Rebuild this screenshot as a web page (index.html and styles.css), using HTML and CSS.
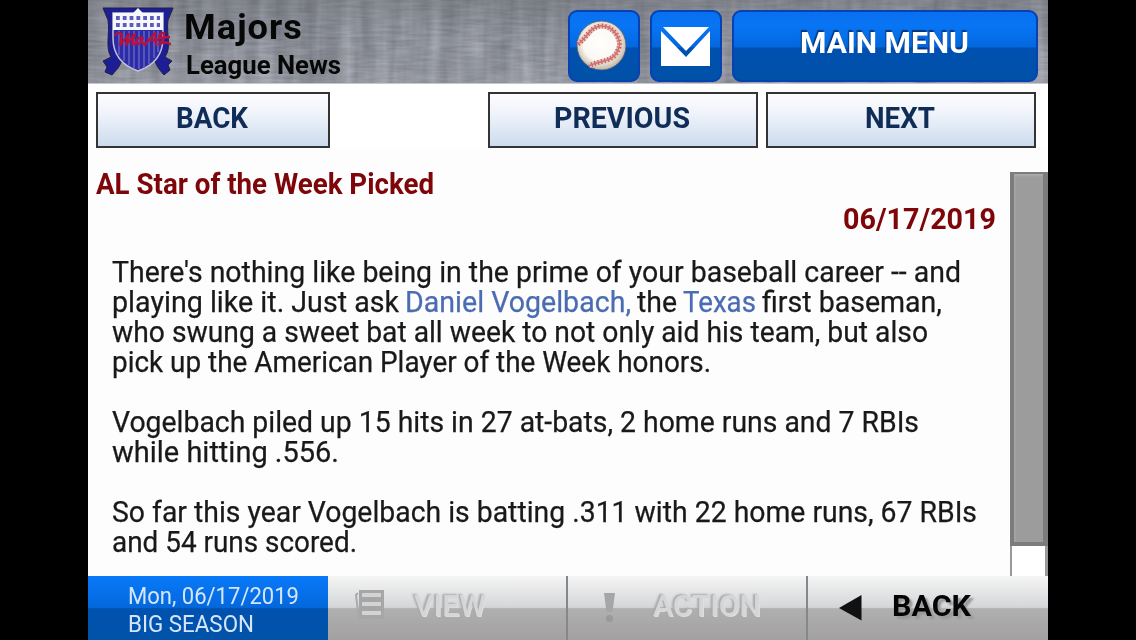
FILE: index.html
```html
<!DOCTYPE html>
<html lang="en">
<head>
<meta charset="utf-8">
<title>League News</title>
<link rel="stylesheet" href="styles.css">
</head>
<body>
<div class="app">
  <header class="header">
    <svg class="texture" width="960" height="84" viewBox="0 0 960 84">
      <defs>
        <linearGradient id="shade" x1="0" y1="0" x2="0" y2="1"><stop offset="0" stop-color="#6c7077" stop-opacity=".5"/><stop offset=".5" stop-color="#80858f" stop-opacity=".25"/><stop offset="1" stop-color="#a0a4b0" stop-opacity=".3"/></linearGradient>
        <filter id="cloud" x="0" y="0" width="100%" height="100%" color-interpolation-filters="sRGB">
          <feTurbulence type="fractalNoise" baseFrequency="0.012 0.02" numOctaves="3" seed="4"/>
          <feColorMatrix values="0.6 0 0 0 .27  0.6 0 0 0 .28  0.6 0 0 0 .31  0 0 0 0 .5"/>
        </filter>
        <filter id="weave" x="0" y="0" width="100%" height="100%" color-interpolation-filters="sRGB">
          <feTurbulence type="fractalNoise" baseFrequency="0.07 0.008" numOctaves="3" seed="9"/>
          <feColorMatrix values="0.9 0 0 0 .11  0.9 0 0 0 .12  0.9 0 0 0 .15  0 0 0 0 .4"/>
        </filter>
        <filter id="grain" x="0" y="0" width="100%" height="100%" color-interpolation-filters="sRGB">
          <feTurbulence type="fractalNoise" baseFrequency="0.04 0.35" numOctaves="2" seed="3"/>
          <feColorMatrix values="0.7 0 0 0 .21  0.7 0 0 0 .22  0.7 0 0 0 .25  0 0 0 0 .25"/>
        </filter>
      </defs>
      <rect width="960" height="84" fill="#92959d"/>
      <rect width="960" height="84" filter="url(#cloud)"/>
      <rect width="960" height="84" filter="url(#weave)"/>
      <rect width="960" height="84" filter="url(#grain)"/>
      <rect width="960" height="84" fill="url(#shade)"/>
    </svg>
    <svg class="crest" width="72" height="72" viewBox="0 0 72 72">
      <g fill="#1d1d96" stroke="#222238" stroke-width="1">
        <path d="M1 1H71L66 13C64 27 70 40 63 50L70 54L66 58L68 63L62 68C57 62 53 58 52 49L60 20H12L21 49C19 59 15 62 10 68L3 65L5 60L1 54L9 50C3 40 8 27 6 13Z"/>
      </g>
      <path d="M11 6H61V31C61 47 53 58 36 64C19 58 11 47 11 31Z" fill="#2c2ca8" stroke="#c2c2d6" stroke-width="1.5"/>
      <path d="M17 24V48M22 24V54M27 24V58M32 24V61M37 24V62M42 24V61M47 24V57M52 24V51M56 24V45" stroke="#6060bf" stroke-width="1.6"/>
      <path d="M11 6H31L36 1L41 6H61V23H11Z" fill="#f6f6fb"/>
      <path d="M14 11H58M14 18H58" stroke="#5c5cbd" stroke-width="3.8" stroke-dasharray="3.8 3"/>
      <g fill="none" stroke="#b5123f" stroke-width="2.300" stroke-linecap="round" stroke-linejoin="round">
        <path d="M13 28Q16 25 20 27L18 38L27 27L24 38L33 27L30 37Q33 38 35 35"/>
        <path d="M41 31Q35 30 34 35Q35 39 39 35L41 31Q38 37 43 37"/>
        <path d="M43 38L53 26L54 38M46 33H56M57 37Q63 34 62 26Q57 26 57 31L67 30M58 37Q64 34 68 37"/>
      </g>
    </svg>
    <div class="titles">
      <div class="row-title"><span class="fit" data-w="119">Majors</span></div>
      <div class="row-sub"><span class="fit" data-w="155">League News</span></div>
    </div>
    <div class="btn icon-btn">
      <svg width="52" height="52" viewBox="0 0 52 52">
        <defs>
          <radialGradient id="ball" cx=".48" cy=".45" r=".55"><stop offset="0" stop-color="#fff"/><stop offset=".65" stop-color="#fbf8f2"/><stop offset="1" stop-color="#bfb39f"/></radialGradient>
        </defs>
        <circle cx="25.500" cy="25.500" r="24.500" fill="url(#ball)" stroke="#4c5a78" stroke-width=".8"/>
        <g fill="none">
          <path d="M2 24C12 17 13 8 24 6C39 5 47 22 42 30C37 43 23 40 13 46" stroke="#e4c3bd" stroke-width="5"/>
          <path d="M2 24C12 17 13 8 24 6C39 5 47 22 42 30C37 43 23 40 13 46" stroke="#cd5f5f" stroke-width="5" stroke-dasharray="1.200 2.200"/>
          <path d="M2 24C12 17 13 8 24 6C39 5 47 22 42 30C37 43 23 40 13 46" stroke="#d0706e" stroke-width="1.5"/>
        </g>
      </svg>
    </div>
    <div class="btn icon-btn mail">
      <svg width="50" height="41" viewBox="0 0 50 41">
        <path d="M0 5L25 31L49 5V40H0Z" fill="#fff"/>
        <path d="M2 1H48L25 25Z" fill="#fff"/>
      </svg>
    </div>
    <div class="btn menu-btn"><span class="fit" data-w="169">MAIN MENU</span></div>
  </header>

  <nav class="nav">
    <div class="nav-btn back"><span class="fit" data-w="72">BACK</span></div>
    <div class="nav-btn prev"><span class="fit" data-w="136">PREVIOUS</span></div>
    <div class="nav-btn next"><span class="fit" data-w="70">NEXT</span></div>
  </nav>

  <main class="content">
    <article class="article">
      <h1 class="headline"><span class="fit" data-w="338">AL Star of the Week Picked</span></h1>
      <div class="date"><span class="fit" data-w="153">06/17/2019</span></div>
      <p class="para">
        <span class="line"><span class="fit" data-w="849">There's nothing like being in the prime of your baseball career -- and</span></span>
        <span class="line"><span class="fit" data-w="287">playing like it. Just ask</span><span class="fit link" data-w="226">Daniel Vogelbach,</span><span class="fit" data-w="40">the</span><span class="fit link" data-w="73">Texas</span><span class="fit" data-w="180">first baseman,</span></span>
        <span class="line"><span class="fit" data-w="816">who swung a sweet bat all week to not only aid his team, but also</span></span>
        <span class="line"><span class="fit" data-w="599">pick up the American Player of the Week honors.</span></span>
      </p>
      <p class="para">
        <span class="line"><span class="fit" data-w="807">Vogelbach piled up 15 hits in 27 at-bats, 2 home runs and 7 RBIs</span></span>
        <span class="line"><span class="fit" data-w="227">while hitting .556.</span></span>
      </p>
      <p class="para">
        <span class="line"><span class="fit" data-w="865">So far this year Vogelbach is batting .311 with 22 home runs, 67 RBIs</span></span>
        <span class="line"><span class="fit" data-w="245">and 54 runs scored.</span></span>
      </p>
    </article>
    <div class="scrollbar"><div class="thumb"></div></div>
  </main>

  <footer class="footer">
    <div class="status">
      <div><span class="fit" data-w="171">Mon, 06/17/2019</span></div>
      <div><span class="fit" data-w="126">BIG SEASON</span></div>
    </div>
    <div class="tab view disabled">
      <svg width="30" height="34" viewBox="0 0 30 34">
        <path d="M3 4L1 6L4 32L20 30" fill="none" stroke="#aaa" stroke-width="2"/>
        <path d="M4 1H29V30H4Z" fill="#a6a6a6"/>
        <path d="M7 4H26V8H7ZM7 13H26V17H7ZM7 22H26V26H7Z" fill="#d2d3d5"/>
      </svg>
      <span class="fit" data-w="72">VIEW</span>
    </div>
    <div class="tab action disabled">
      <svg width="12" height="30" viewBox="0 0 12 30">
        <path d="M0 0H11L8.500 19H2.500Z" fill="#a5a6a8"/><circle cx="5.500" cy="25.500" r="3.500" fill="#999"/>
      </svg>
      <span class="fit" data-w="108">ACTION</span>
    </div>
    <div class="tab return">
      <svg width="23" height="26" viewBox="0 0 23 26"><path d="M0 13L22.500 0V25.500Z" fill="#111"/></svg>
      <span class="fit" data-w="79">BACK</span>
    </div>
  </footer>
</div>
<script src="fit.js"></script>
</body>
</html>
```
FILE: styles.css
```css
* { box-sizing: border-box; }
body { margin: 0; background: #000; font-family: Roboto, "Liberation Sans", sans-serif; overflow: hidden; }
.app { width: 960px; height: 640px; margin: 0 auto; background: #fdfdfd; display: flex; flex-direction: column; }
.fit { display: inline-block; white-space: nowrap; transform-origin: 0 50%; }

.header { position: relative; height: 84px; flex: none; display: flex; align-items: flex-start; padding: 10px 10px 0 14px; background: #92959d; overflow: hidden; border-bottom: 1px solid #c6c8cd; }
.texture { position: absolute; left: 0; top: 0; }
.crest { position: relative; margin-top: -3px; flex: none; }
.titles { position: relative; width: 382px; margin-left: 12px; color: #070707; font-weight: 700; }
.row-title { font-size: 35px; line-height: 38px; margin-left: -2px; margin-top: -1px; letter-spacing: 1px; }
.row-title, .row-sub { height: 36px; }
.row-sub { font-size: 25px; line-height: 42px; }
.btn { position: relative; flex: none; height: 72px; border: 2px solid #0741b2; border-radius: 9px; background: linear-gradient(#0870ef 0, #0875f4 20%, #0468df 51%, #0050b1 53%, #0051a6 100%); display: flex; align-items: center; justify-content: center; }
.icon-btn { width: 72px; margin-right: 10px; }
.icon-btn svg { margin-right: 4px; }
.mail svg { margin: 0; }
.menu-btn { width: 306px; color: #fff; font-size: 30px; font-weight: 700; line-height: 36px; text-shadow: -1px -2px 1px #04377c; padding: 0 2px 6px 0; }

.nav { height: 64px; flex: none; display: flex; padding: 8px 12px 0 8px; background: #fff; }
.nav-btn { height: 56px; border: 2px solid #343434; background: linear-gradient(#fdfdff, #eff3fa 38%, #ccdcee); color: #102d58; font-size: 30px; font-weight: 700; line-height: 48px; text-align: center; display: flex; justify-content: center; padding-right: 2px; }
.back { width: 234px; margin-right: 158px; }
.prev { width: 270px; margin-right: 8px; }
.next { width: 270px; }

.content { height: 428px; flex: none; padding-top: 24px; display: flex; }
.article { width: 922px; height: 404px; padding-left: 8px; }
.headline { margin: 0; font-size: 29px; line-height: 24px; height: 30px; color: #7e0508; }
.date { display: flex; justify-content: flex-end; padding-right: 14px; height: 55px; font-size: 29px; font-weight: 700; line-height: 35px; color: #7e0508; }
.para { margin: 0 0 30px 16px; font-size: 29px; line-height: 30px; color: #191919; -webkit-text-stroke: 0.25px currentColor; }
.line { display: flex; gap: 6px; height: 30px; }
.link { color: #4a6cb3; }
.scrollbar { width: 38px; height: 404px; border-left: 2px solid #999; border-right: 3px solid #999; background: #fff; }
.thumb { height: 374px; margin: 0 -3px 0 -2px; border: solid #7c7c7c; border-width: 2px 5px 4px 4px; background: #9c9c9c; box-shadow: inset 1px 2px 2px #aaa; }

.footer { height: 64px; flex: none; display: flex; }
.status { width: 240px; padding: 6px 0 0 40px; color: #d5e6fc; font-size: 24px; line-height: 28px; background: linear-gradient(#0879f9, #0468dc 49%, #0052b0 51%, #0052a8); }
.status div { height: 28px; }
.tab { display: flex; align-items: flex-start; background: linear-gradient(#f5f5f5, #d4d6d8 49%, #b0b0b0 51%, #a2a0a0); font-size: 30px; font-weight: 700; line-height: 34px; }
.tab svg { flex: none; }
.disabled { color: #d4d6d8; text-shadow: -2px -1px 2px #aaa, 1px 1px 0 #dfdfdf; }
.view { width: 240px; padding: 13px 0 0 27px; gap: 29px; border-right: 2px solid #85878d; }
.view .fit, .action .fit { font-weight: 500; }
.action { width: 240px; padding: 13px 0 0 36px; gap: 37px; border-right: 2px solid #85878d; }
.action svg { margin-top: 4px; }
.return { width: 240px; padding: 13px 0 0 31px; gap: 30px; color: #050505; text-shadow: 3px 3px 2px #999; }
.return svg { margin-top: 6px; }
```
FILE: fit.js
```js
// Condense each text run horizontally to its column width.
document.querySelectorAll('.fit').forEach(el => {
  const natural = el.getBoundingClientRect().width;
  const width = Number(el.dataset.w);
  el.style.transform = `scaleX(${width / natural})`;
  el.style.marginRight = `${width - natural}px`;
});
```
